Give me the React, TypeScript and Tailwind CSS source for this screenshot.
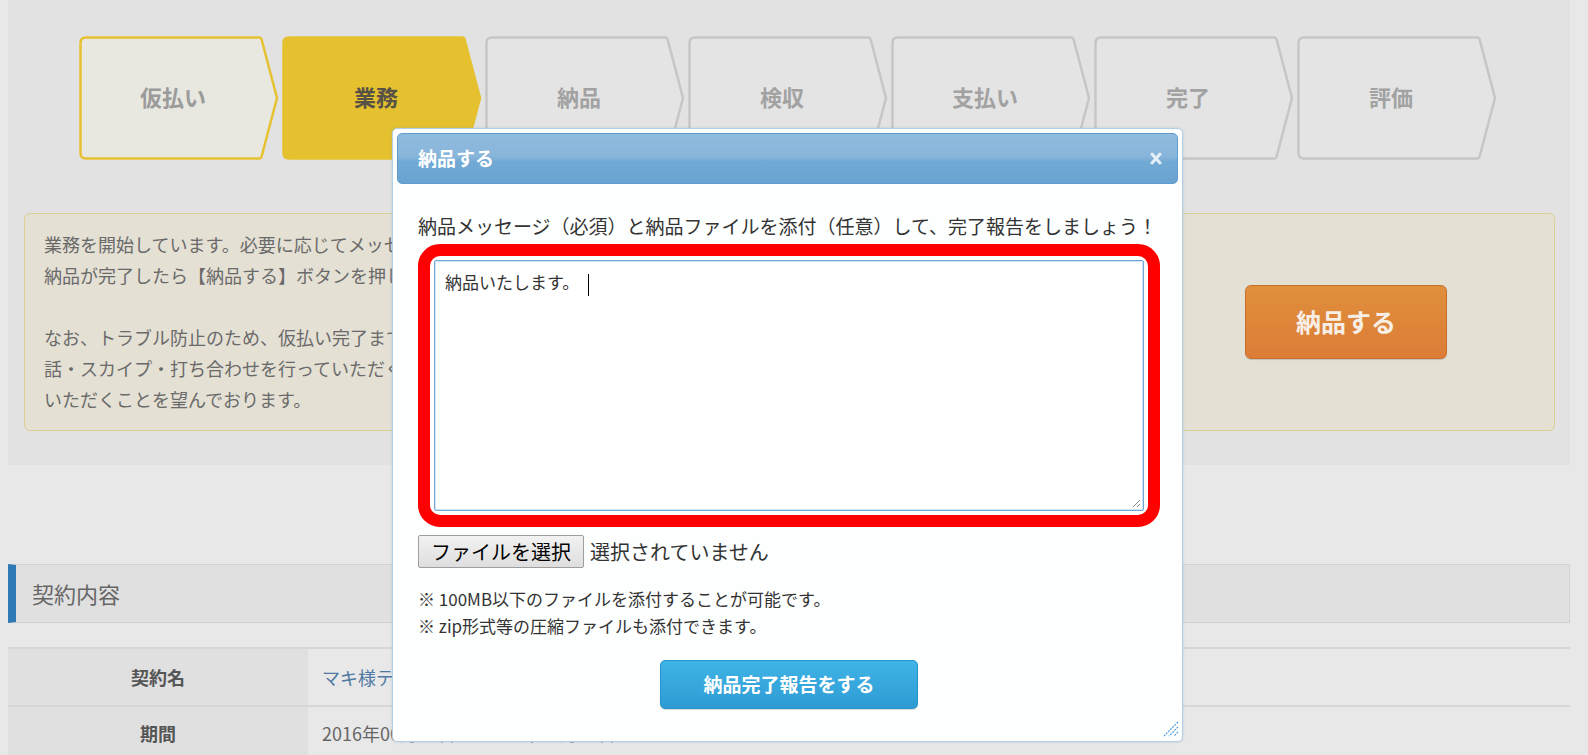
import React from "react";

// ==================== 進行ステップ ====================
const steps = [
  { label: "仮払い", fill: "#e8e7e0", stroke: "#e6c232", text: "text-[#9b9b9b]" },
  { label: "業務", fill: "#e5c12f", stroke: "#e5c12f", text: "text-[#575245]" },
  { label: "納品", fill: "#e4e4e4", stroke: "#c6c6c6", text: "text-[#a2a2a2]" },
  { label: "検収", fill: "#e4e4e4", stroke: "#c6c6c6", text: "text-[#a2a2a2]" },
  { label: "支払い", fill: "#e4e4e4", stroke: "#c6c6c6", text: "text-[#a2a2a2]" },
  { label: "完了", fill: "#e4e4e4", stroke: "#c6c6c6", text: "text-[#a2a2a2]" },
  { label: "評価", fill: "#e4e4e4", stroke: "#c6c6c6", text: "text-[#a2a2a2]" },
];

function Step({ label, fill, stroke, text }: { label: string; fill: string; stroke: string; text: string }) {
  return (
    <div className="relative h-[124px] w-[200px] shrink-0">
      <svg className="absolute inset-0" width="200" height="124" viewBox="0 0 200 124">
        <path
          d="M7 1.5H180Q182 1.5 182.6 3.5L198 62L182.6 120.5Q182 122.5 180 122.5H7Q1.5 122.5 1.5 117V7Q1.5 1.5 7 1.5Z"
          fill={fill}
          stroke={stroke}
          strokeWidth="2.5"
          strokeLinejoin="round"
        />
      </svg>
      <div className={`relative flex h-full w-[188px] items-center justify-center pb-[4px] text-[22px] font-bold ${text}`}>
        {label}
      </div>
    </div>
  );
}

// ==================== 納品モーダル ====================
function DeliveryModal() {
  return (
    <div className="absolute left-[392px] top-[128px] h-[614px] w-[791px] rounded-[5px] border border-[#b3cfe8] bg-[#fdfefe] p-[4px] shadow-[0_0_3px_rgba(120,160,200,0.35)]">
      {/* ヘッダー */}
      <div className="flex h-[51px] items-center justify-between rounded-[5px] border border-[#5f9dd1] bg-[linear-gradient(to_bottom,#8fbbde_0%,#88b5da_46%,#72aad5_56%,#69a3d1_100%)] pl-[20px] pr-[15px]">
        <span className="text-[19px] font-bold text-white">納品する</span>
        <svg width="12" height="13" viewBox="0 0 12 13">
          <path d="M2 2L10 11M10 2L2 11" stroke="#e6eef7" strokeWidth="3" strokeLinecap="round" />
        </svg>
      </div>

      {/* 本文 */}
      <div className="pl-[21px] pr-[18px] pt-[30px]">
        <p className="whitespace-nowrap text-[19px] leading-[24px] text-[#333]">
          納品メッセージ（必須）と納品ファイルを添付（任意）して、完了報告をしましょう！
        </p>

        <div className="mt-[6px] h-[283px] w-[742px] rounded-[22px] border-[12px] border-[#ff0000] bg-white p-[4px]">
          <div className="relative h-full rounded-[2px] border border-[#72a6d6] bg-white pl-[10px] pt-[9px] shadow-[inset_0_0_0_1px_#d4e6f6]">
            <span className="text-[17px] leading-[24px] text-[#333]">納品いたします。</span>
            <span className="ml-[9px] inline-block h-[22px] w-[1px] bg-black align-middle" />
            <svg className="absolute bottom-[2px] right-[2px]" width="10" height="10" viewBox="0 0 10 10">
              <path d="M9 2L2 9M9 6L6 9" stroke="#8a8a8a" strokeWidth="1" />
            </svg>
          </div>
        </div>

        <div className="mt-[8px] flex h-[33px] items-center">
          <div className="flex h-[33px] items-center rounded-[2px] border border-[#9e9e9e] bg-[linear-gradient(to_bottom,#f2f2f2,#dedede)] px-[12px] text-[20px] text-black">
            ファイルを選択
          </div>
          <span className="ml-[6px] text-[20px] text-[#333]">選択されていません</span>
        </div>

        <div className="mt-[17px] text-[17px] leading-[27px] text-[#333]">
          <p>※ 100MB以下のファイルを添付することが可能です。</p>
          <p>※ zip形式等の圧縮ファイルも添付できます。</p>
        </div>

        <div className="mt-[21px] flex justify-center">
          <div className="flex h-[49px] w-[258px] items-center justify-center rounded-[5px] border border-[#2b93cb] bg-[linear-gradient(to_bottom,#3fb4e6,#2e9bd4)] text-[19px] font-bold text-white shadow-[0_1px_1px_rgba(0,0,0,0.15)]">
            納品完了報告をする
          </div>
        </div>
      </div>

      {/* リサイズハンドル */}
      <svg className="absolute bottom-[4px] right-[3px]" width="18" height="18" viewBox="0 0 18 18">
        <path d="M17 3L3 17M17 8L8 17M17 13L13 17" stroke="#5e9fd9" strokeWidth="1.3" strokeDasharray="2 1" />
      </svg>
    </div>
  );
}

export default function App() {
  return (
    <div className="relative h-[755px] w-[1588px] overflow-hidden bg-[#e8e8e8] font-['Noto_Sans_CJK_JP','Noto_Sans',sans-serif]">
      <div className="pl-[8px] pr-[18px]">
        {/* 進行状況パネル */}
        <div className="bg-[#e2e2e2] pb-[34px] pt-[36px]">
          <div className="flex gap-[3px] pl-[71px]">
            {steps.map((s) => (
              <Step key={s.label} {...s} />
            ))}
          </div>

          <div className="ml-[16px] mr-[15px] mt-[53px] flex h-[218px] items-center justify-between rounded-[6px] border border-[#dccf95] bg-[#e4e0d4] pl-[19px] pr-[107px]">
            <div className="whitespace-nowrap text-[18px] leading-[31px] text-[#6a6a6a]">
              <p>業務を開始しています。必要に応じてメッセージで連絡を取りながら進めてください。</p>
              <p>納品が完了したら【納品する】ボタンを押して納品を行ってください。</p>
              <p>&nbsp;</p>
              <p>なお、トラブル防止のため、仮払い完了までは作業を開始せず、電</p>
              <p>話・スカイプ・打ち合わせを行っていただく場合もメッセージでご連絡</p>
              <p>いただくことを望んでおります。</p>
            </div>
            <div className="flex h-[74px] w-[202px] items-center justify-center rounded-[6px] border border-[#c8712f] bg-[linear-gradient(to_bottom,#e08f3b,#dc7c37)] text-[25px] font-bold text-[#f7efe6] shadow-[0_1px_1px_rgba(0,0,0,0.15)]">
              納品する
            </div>
          </div>
        </div>

        {/* 契約内容 */}
        <div className="mt-[99px] flex h-[59px] items-center border border-l-[8px] border-[#d2d2d2] border-l-[#2e7ab7] bg-[#e0e0e0] pl-[16px] text-[22px] text-[#666]">
          契約内容
        </div>

        <div className="mt-[24px] border-t-2 border-[#d6d6d6]">
          <div className="grid h-[58px] grid-cols-[300px_1fr] border-b-2 border-[#d6d6d6]">
            <div className="flex items-center justify-center bg-[#e0e0e0] text-[18px] font-bold text-[#555]">契約名</div>
            <div className="flex items-center pl-[14px] text-[18px] text-[#5079a3]">マキ様テスト契約</div>
          </div>
          <div className="grid h-[54px] grid-cols-[300px_1fr] border-b-2 border-[#d6d6d6]">
            <div className="flex items-center justify-center bg-[#e0e0e0] text-[18px] font-bold text-[#555]">期間</div>
            <div className="flex items-center pl-[14px] text-[18px] text-[#666]">2016年06月01日 〜 2016年06月30日</div>
          </div>
        </div>
      </div>

      <DeliveryModal />
    </div>
  );
}
